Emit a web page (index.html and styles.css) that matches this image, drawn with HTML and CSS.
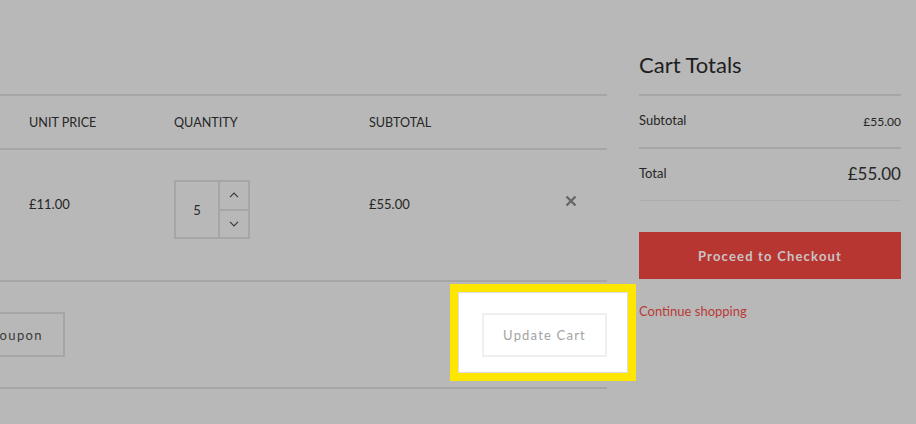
FILE: index.html
```html
<!DOCTYPE html>
<html lang="en">
<head>
<meta charset="utf-8">
<title>Cart</title>
<link rel="stylesheet" href="styles.css">
</head>
<body>
<div class="page">
  <main class="cart">
    <div class="cart-table">
      <div class="row head">
        <span class="cell">UNIT PRICE</span>
        <span class="cell">QUANTITY</span>
        <span class="cell">SUBTOTAL</span>
        <span class="cell"></span>
      </div>
      <div class="row item">
        <span class="cell text">£11.00</span>
        <div class="cell">
          <div class="qty">
            <div class="qty-val">5</div>
            <div class="qty-btns">
              <button class="qty-btn" aria-label="Increase">
                <svg width="10" height="6" viewBox="0 0 10 6"><path d="M1 5.2 L5 1.2 L9 5.2" fill="none" stroke="#3a3a3a" stroke-width="1.2"/></svg>
              </button>
              <button class="qty-btn down" aria-label="Decrease">
                <svg width="10" height="6" viewBox="0 0 10 6"><path d="M1 0.8 L5 4.8 L9 0.8" fill="none" stroke="#3a3a3a" stroke-width="1.2"/></svg>
              </button>
            </div>
          </div>
        </div>
        <span class="cell text">£55.00</span>
        <span class="cell remove">
          <svg width="12" height="12" viewBox="0 0 12 12"><path d="M1.5 1.5 L10.5 10.5 M10.5 1.5 L1.5 10.5" stroke="#676767" stroke-width="2.4" stroke-linecap="butt"/></svg>
        </span>
      </div>
    </div>
    <div class="actions">
      <button class="coupon">Apply Coupon</button>
      <div class="highlight">
        <div class="hl-inner">
          <button class="update">Update Cart</button>
        </div>
      </div>
    </div>
  </main>
  <aside class="totals">
    <h2 class="totals-title">Cart Totals</h2>
    <div class="totals-table">
      <div class="t-row">
        <span>Subtotal</span>
        <span class="t-small">£55.00</span>
      </div>
      <div class="t-row last">
        <span>Total</span>
        <span class="t-big">£55.00</span>
      </div>
    </div>
    <button class="checkout">Proceed to Checkout</button>
    <a class="continue" href="#">Continue shopping</a>
  </aside>
</div>
</body>
</html>
```

FILE: styles.css
```css
* { box-sizing: border-box; }

html, body {
  margin: 0;
  padding: 0;
  background: #b8b8b8;
  overflow: hidden;
}

body {
  font-family: Lato, "Noto Sans", sans-serif;
  font-size: 13px;
  color: #262626;
  width: 916px;
  height: 424px;
}

.page {
  display: flex;
  align-items: flex-start;
  gap: 32px;
}

.cart {
  width: 607px;
  margin-top: 94px;
  border-top: 2px solid #a6a6a6;
}

.row {
  display: grid;
  grid-template-columns: 145px 195px 172px 60px;
  padding-left: 29px;
  padding-right: 6px;
  border-bottom: 2px solid #a6a6a6;
}

.head {
  height: 54px;
  align-items: center;
  font-size: 12.6px;
  padding-top: 1px;
}

.item {
  height: 132px;
  align-items: start;
  padding-top: 30px;
}

.text {
  margin-top: 16px;
  line-height: 16px;
}

.remove {
  display: flex;
  justify-content: center;
  margin-top: 15px;
}

.qty {
  display: flex;
  width: 76px;
  height: 59px;
  border: 2px solid #a6a6a6;
}

.qty-val {
  width: 44px;
  border-right: 2px solid #a6a6a6;
  display: flex;
  align-items: center;
  justify-content: center;
  font-size: 13px;
  color: #2a2a2a;
}

.qty-btns {
  flex: 1;
  display: flex;
  flex-direction: column;
}

.qty-btn {
  flex: 1;
  border: 0;
  padding: 0;
  background: transparent;
  display: flex;
  align-items: center;
  justify-content: center;
}

.qty-btn.down {
  border-top: 2px solid #a6a6a6;
}

.actions {
  height: 107px;
  display: flex;
  justify-content: space-between;
  align-items: flex-start;
  border-bottom: 2px solid #a6a6a6;
}

.coupon {
  margin-top: 30px;
  margin-left: -80px;
  width: 145px;
  height: 45px;
  border: 2px solid #a6a6a6;
  background: transparent;
  font-family: Lato, "Noto Sans", sans-serif;
  font-size: 13px;
  letter-spacing: 1.4px;
  color: #3a3a3a;
  padding: 0 20px 0 0;
  text-align: right;
}

.highlight {
  margin-top: 2px;
  margin-right: -29px;
  border: 8px solid #ffe600;
  background: #ffffff;
}

.hl-inner {
  border: 1px solid #dcdcdc;
  padding: 20px 20px 15px 23px;
  background: #ffffff;
}

.update {
  display: block;
  width: 125px;
  height: 44px;
  border: 2px solid #efefef;
  background: #ffffff;
  font-family: Lato, "Noto Sans", sans-serif;
  font-size: 13px;
  letter-spacing: 1.2px;
  color: #a3a3a3;
  padding: 0;
}

.totals {
  width: 262px;
  display: flex;
  flex-direction: column;
}

.totals-title {
  margin: 52px 0 16px;
  font-size: 22px;
  line-height: 26px;
  font-weight: 400;
  color: #1e1e1e;
}

.totals-table {
  border-top: 2px solid #a6a6a6;
}

.t-row {
  height: 53px;
  display: flex;
  justify-content: space-between;
  align-items: center;
  border-bottom: 2px solid #a6a6a6;
  color: #262626;
  padding-bottom: 3px;
}

.t-row.last {
  height: 52px;
  border-bottom: 1px solid #acacac;
}

.t-small {
  font-size: 12px;
  padding-top: 3px;
}

.t-big {
  font-size: 17px;
}

.checkout {
  margin-top: 31px;
  height: 47px;
  border: 0;
  background: #b83632;
  color: #cac4c4;
  font-family: Lato, "Noto Sans", sans-serif;
  font-size: 13px;
  font-weight: 700;
  letter-spacing: 1.2px;
}

.continue {
  margin-top: 24px;
  line-height: 16px;
  color: #b83a36;
  text-decoration: none;
  font-size: 13px;
}
```
